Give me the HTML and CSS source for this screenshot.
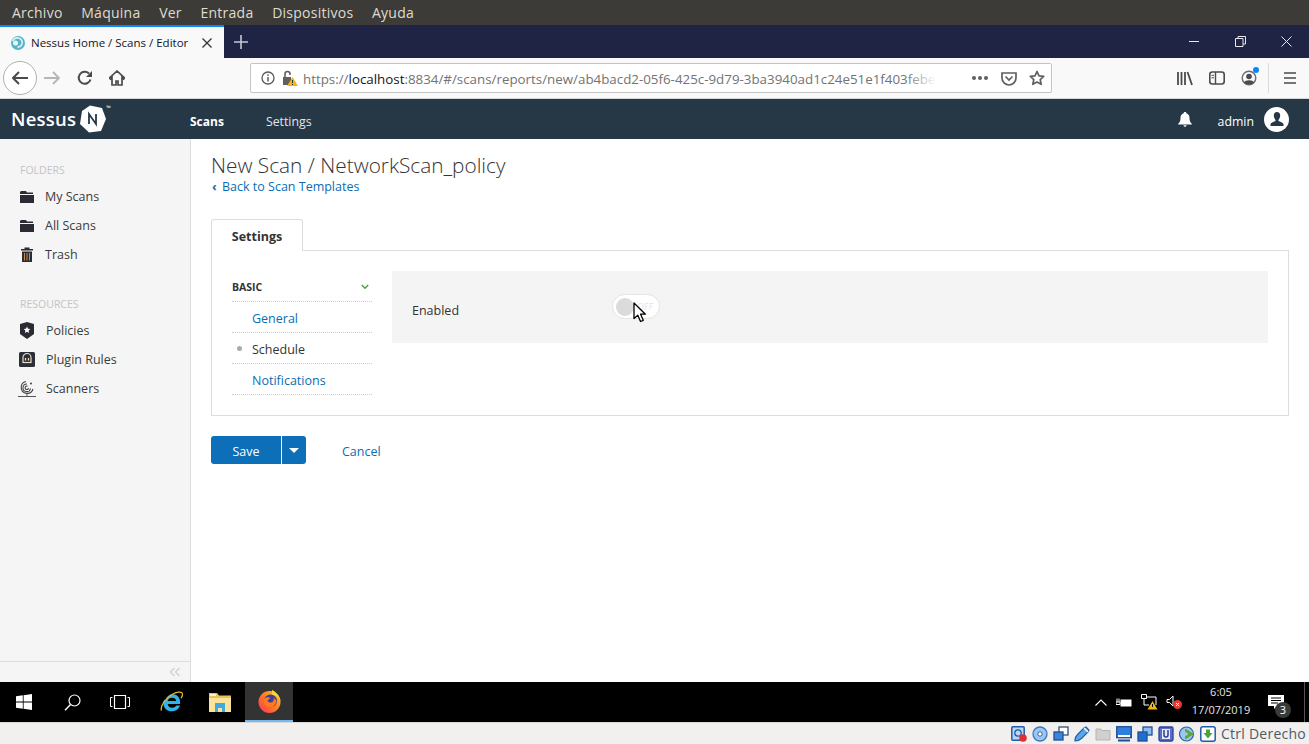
FILE: index.html
```html
<!DOCTYPE html>
<html lang="en">
<head>
    <meta charset="UTF-8">
    <meta name="viewport" content="width=device-width, initial-scale=1.0">
    <title>Nessus Home / Scans / Editor</title>
    <link rel="stylesheet" href="styles.css">
</head>
<body>
    <!-- VirtualBox menu -->
    <nav class="vm-menu">
        <span>Archivo</span><span>Máquina</span><span>Ver</span><span>Entrada</span><span>Dispositivos</span><span>Ayuda</span>
    </nav>

    <!-- Firefox tabs -->
    <div class="tabbar">
        <div class="tab">
            <svg class="favicon" width="16" height="16" viewBox="0 0 16 16"><circle cx="8" cy="8" r="7" fill="#55b4c6"/><path d="M2.500 6c2-4 7-4 9-1s0 7-4 7" fill="none" stroke="#d5eff5" stroke-width="1.800"/><circle cx="5.500" cy="8" r="2.500" fill="#e8f7fa"/></svg>
            <span class="tab-title">Nessus Home / Scans / Editor</span>
            <svg class="tab-close" width="10" height="10" viewBox="0 0 10 10"><path d="M.5.5l9 9M9.500.5l-9 9" stroke="#333" stroke-width="1.300"/></svg>
        </div>
        <svg class="new-tab" width="14" height="14" viewBox="0 0 14 14"><path d="M7 0v14M0 7h14" stroke="#c8c9d2" stroke-width="1.600"/></svg>
        <div class="win-buttons">
            <svg width="11" height="11" viewBox="0 0 11 11"><path d="M0 5.500h10" stroke="#e8e8ee"/></svg>
            <svg width="11" height="11" viewBox="0 0 11 11"><path d="M.5 2.500h7.500v8h-7.500zM3 2.500v-2h7.500v7.500h-2.500" fill="none" stroke="#e8e8ee"/></svg>
            <svg width="11" height="11" viewBox="0 0 11 11"><path d="M.5.5l10 10M10.500.5l-10 10" stroke="#e8e8ee"/></svg>
        </div>
    </div>

    <!-- Firefox toolbar -->
    <div class="toolbar">
        <div class="nav-icons">
            <button class="back-btn">
                <svg width="16" height="14" viewBox="0 0 16 14"><path d="M7 1L1 7l6 6M1 7h15" fill="none" stroke="#4a4a4f" stroke-width="2"/></svg>
            </button>
            <svg class="fwd" width="16" height="14" viewBox="0 0 16 14"><path d="M9 1l6 6-6 6M15 7H0" fill="none" stroke="#b5b5b8" stroke-width="1.800"/></svg>
            <svg class="reload" width="16" height="16" viewBox="0 0 16 16"><path d="M13.500 9.500A6 6 0 1 1 12 3.500" fill="none" stroke="#4a4a4f" stroke-width="2"/><path d="M15 1v6H9z" fill="#4a4a4f"/></svg>
            <svg class="home" width="16" height="16" viewBox="0 0 16 16"><path d="M8 1L.5 8l1 1L3 7.700V15h4v-4h2v4h4V7.700L14.500 9l1-1z" fill="none" stroke="#4a4a4f" stroke-width="1.700"/></svg>
        </div>
        <div class="urlbar">
            <svg class="info" width="14" height="14" viewBox="0 0 14 14"><circle cx="7" cy="7" r="6" fill="none" stroke="#5a5a5f" stroke-width="1.300"/><path d="M7 6v4.500M7 3.300v1.500" stroke="#5a5a5f" stroke-width="1.500"/></svg>
            <svg class="lock" width="16" height="16" viewBox="0 0 16 16"><path d="M1 7h8v8H1z" fill="#5f5f64"/><path d="M3 7V4a2.500 2.500 0 0 1 5 0v1" fill="none" stroke="#5f5f64" stroke-width="1.600"/><path d="M10.500 7L16 16H5z" fill="#f5b50b"/><path d="M10.500 10v3M10.500 14v1" stroke="#333" stroke-width="1"/></svg>
            <div class="url"><span class="url-dim">https://</span>localhost<span class="url-dim">:8834/#/scans/reports/new/ab4bacd2-05f6-425c-9d79-3ba3940ad1c24e51e1f403febe</span></div>
            <div class="url-actions">
                <span class="dots"><i></i><i></i><i></i></span>
                <svg width="16" height="15" viewBox="0 0 16 15"><path d="M1 2h14v5a7 7 0 0 1-14 0z" fill="none" stroke="#5f5f64" stroke-width="1.700"/><path d="M4.500 5.500L8 9l3.500-3.500" fill="none" stroke="#5f5f64" stroke-width="1.700"/></svg>
                <svg width="16" height="16" viewBox="0 0 16 16"><path d="M8 1.500l2 4.400 4.700.5-3.500 3.200 1 4.700L8 12l-4.200 2.300 1-4.700L1.300 6.400 6 5.900z" fill="none" stroke="#5f5f64" stroke-width="1.700" stroke-linejoin="round"/></svg>
            </div>
        </div>
        <div class="tool-icons">
            <svg width="16" height="15" viewBox="0 0 16 15"><path d="M1 1v13M4.500 1v13M8 1v13M10.500 1l4.500 13" stroke="#4a4a4f" stroke-width="1.800" fill="none"/></svg>
            <svg width="16" height="14" viewBox="0 0 16 14"><rect x=".8" y="1" width="14.400" height="12" rx="2.500" fill="none" stroke="#4a4a4f" stroke-width="1.600"/><path d="M6.500 1v12" stroke="#4a4a4f" stroke-width="1.400"/><path d="M2.500 4.300h2.500M2.500 6.800h2.500" stroke="#4a4a4f"/></svg>
            <span class="account">
                <svg width="16" height="16" viewBox="0 0 16 16"><circle cx="8" cy="8" r="6.800" fill="none" stroke="#6a6a6f" stroke-width="1.400"/><circle cx="8" cy="6.500" r="2.800" fill="#4a4a4f"/><path d="M3 12.500c1-3 9-3 10 0-2 2.500-8 2.500-10 0z" fill="#4a4a4f"/></svg>
                <i class="badge-dot"></i>
            </span>
            <span class="tool-sep"></span>
            <svg width="12" height="12" viewBox="0 0 12 12"><path d="M0 1h12M0 6h12M0 11h12" stroke="#4a4a4f" stroke-width="1.700"/></svg>
        </div>
    </div>

    <!-- Nessus header -->
    <header class="app-header">
        <div class="logo">
            <span class="logo-text">Nessus</span>
            <svg width="30" height="30" viewBox="0 0 30 30"><path d="M12 1.500L24 4l4 11-5 12-12 1.500L2 20 4 7z" fill="#fff"/><path d="M11 20V10l7 10V10" fill="none" stroke="#263746" stroke-width="1.800"/></svg>
            <span class="tm">™</span>
        </div>
        <a class="nav-link nav-active">Scans</a>
        <a class="nav-link">Settings</a>
        <div class="header-right">
            <svg width="14" height="15" viewBox="0 0 14 15"><path d="M7 0c1 0 1.300.6 1.300 1.200C10.500 1.800 11.500 3.600 11.500 6c0 3 .8 4.500 2.300 5.800v.7H.2v-.7C1.700 10.500 2.500 9 2.500 6c0-2.400 1-4.200 3.200-4.800C5.700.6 6 0 7 0zM5.500 13.300h3a1.500 1.500 0 0 1-3 0z" fill="#fff"/></svg>
            <span class="admin">admin</span>
            <span class="avatar">
                <svg width="14" height="14" viewBox="0 0 14 14"><path d="M7 0c2 0 3.200 1.500 3.200 3.500S9 7.500 8.500 8v1c1.500.8 4.500 1.300 5 3v2H.5v-2c.5-1.700 3.500-2.200 5-3V8C5 7.500 3.800 5.500 3.800 3.500S5 0 7 0z" fill="#263746"/></svg>
            </span>
        </div>
    </header>

    <div class="app-body">
        <aside class="sidebar">
            <div class="side-scroll">
                <h4 class="side-title">FOLDERS</h4>
                <ul class="side-list">
                    <li>
                        <svg width="14" height="12" viewBox="0 0 14 12"><path d="M1 0h5l1 1.500h6V3H0V1zM0 4h14v8H0z" fill="#2b2b33"/></svg>
                        My Scans
                    </li>
                    <li>
                        <svg width="14" height="12" viewBox="0 0 14 12"><path d="M1 0h5l1 1.500h6V3H0V1zM0 4h14v8H0z" fill="#2b2b33"/></svg>
                        All Scans
                    </li>
                    <li>
                        <svg width="14" height="15" viewBox="0 0 14 15"><path d="M1 2h3.500V.5h5V2H13v1.500H1zM2 4.500h10V15H2z" fill="#2b2b33"/><path d="M4.500 6v7.500M7 6v7.500M9.500 6v7.500" stroke="#c58a4a"/></svg>
                        Trash
                    </li>
                </ul>
                <h4 class="side-title second">RESOURCES</h4>
                <ul class="side-list wide">
                    <li>
                        <svg width="15" height="17" viewBox="0 0 15 17"><path d="M7.500 0l7 2v10l-7 5-7-5V2z" fill="#2b2b33"/><path d="M7.500 4.500l1 2.200 2.400.3-1.800 1.600.5 2.400-2.100-1.200-2.100 1.200.5-2.400L4.100 7l2.400-.3z" fill="#fff"/></svg>
                        Policies
                    </li>
                    <li>
                        <svg width="16" height="15" viewBox="0 0 16 15"><rect width="16" height="15" rx="1.500" fill="#2b2f3a"/><path d="M4 12V7a4 4 0 0 1 8 0v5" fill="none" stroke="#e9dcc0" stroke-width="1.200" transform="translate(0 -1.500)"/><path d="M3.500 10.500h9" stroke="#e9dcc0" stroke-width="1.200"/><path d="M6.500 6v2.500M9.500 6v2.500" stroke="#e9dcc0" stroke-width="1.300"/></svg>
                        Plugin Rules
                    </li>
                    <li>
                        <svg width="18" height="18" viewBox="0 0 18 18"><path d="M8 1.500A6 6 0 1 0 15 9M9 4A3.800 3.800 0 1 0 12.500 8.500M9.500 6.300A1.700 1.700 0 1 0 10.500 8" fill="none" stroke="#444" stroke-width="1.100"/><circle cx="13" cy="3.500" r="1" fill="#444"/><path d="M9 13.500v3M0 16.500h18" stroke="#555"/></svg>
                        Scanners
                    </li>
                </ul>
            </div>
            <div class="side-footer">
                <svg width="12" height="10" viewBox="0 0 12 10"><path d="M5.500 1L1.500 5l4 4M10.500 1l-4 4 4 4" fill="none" stroke="#cfd0d3" stroke-width="1.400"/></svg>
            </div>
        </aside>

        <main class="content">
            <h1 class="page-title">New Scan / NetworkScan_policy</h1>
            <a class="back-link"><span class="back-caret">‹</span>Back to Scan Templates</a>

            <div class="tabs">
                <div class="tab-item">Settings</div>
            </div>
            <section class="panel">
                <div class="side-menu">
                    <div class="menu-head">
                        BASIC
                        <svg width="8" height="6" viewBox="0 0 8 6"><path d="M.8 1l3.200 3.200L7.200 1" fill="none" stroke="#4aa53c" stroke-width="1.500"/></svg>
                    </div>
                    <a class="menu-row">General</a>
                    <a class="menu-row current">Schedule</a>
                    <a class="menu-row">Notifications</a>
                </div>
                <div class="form-block">
                    <label class="form-label">Enabled</label>
                    <div class="toggle">
                        <span class="knob"></span>
                        <span class="toggle-text">OFF</span>
                    </div>
                    <svg class="cursor" width="13" height="21" viewBox="0 0 13 21"><path d="M1 1v15.500l3.800-3.300 2.700 6.300 2.800-1.200-2.700-6.100h4.800z" fill="#fff" stroke="#000" stroke-width="1.300" stroke-linejoin="round"/></svg>
                </div>
            </section>

            <div class="actions">
                <button class="btn-save">Save</button>
                <button class="btn-caret"><i></i></button>
                <a class="cancel">Cancel</a>
            </div>
        </main>
    </div>

    <!-- Windows taskbar -->
    <footer class="taskbar">
        <div class="task-left">
            <span class="task-item">
                <svg width="16" height="16" viewBox="0 0 16 16"><path d="M0 2.300L6.800 1.300v6.300H0zM7.600 1.200L16 0v7.600H7.600zM0 8.400h6.800v6.300L0 13.700zM7.600 8.400H16V16l-8.400-1.200z" fill="#fff"/></svg>
            </span>
            <span class="task-item">
                <svg width="17" height="17" viewBox="0 0 17 17"><circle cx="10.500" cy="6.500" r="5.500" fill="none" stroke="#fff" stroke-width="1.200"/><path d="M6.500 10.500L1 16.300" stroke="#fff" stroke-width="1.400"/></svg>
            </span>
            <span class="task-item">
                <svg width="20" height="14" viewBox="0 0 20 14"><path d="M4.500.5h11v13h-11z" fill="none" stroke="#fff" stroke-width="1.200"/><path d="M2.500 2.500H.5v9h2M17.500 2.500h2v9h-2" fill="none" stroke="#fff"/></svg>
            </span>
            <span class="task-item">
                <svg width="23" height="23" viewBox="0 0 24 23"><path d="M6 8.500C7 5 10 3 13 3c5 0 8 3.500 8 8.500v1.500H8c.3 2.500 2 4 4.500 4 2 0 3.500-.8 4.500-2.300h4c-1.500 3.800-4.800 6-8.500 6C7 20.700 3.500 17 3.500 12c0-1.300.3-2.500 1-3.500zM8 10h9c-.3-2.300-2-3.500-4.300-3.500S8.500 7.700 8 10z" fill="#2bb5e8"/><path d="M1.500 20C0 15 6 7 13 3c4-2.500 8.500-3 10-1.500 1 1 .5 3-1 5.500" fill="none" stroke="#e3b32a" stroke-width="1.300"/></svg>
            </span>
            <span class="task-item">
                <svg width="22" height="19" viewBox="0 0 22 19"><path d="M0 0h8l2 2.500h12V19H0z" fill="#eac25c"/><path d="M0 5h22v14H0z" fill="#fbe39a"/><path d="M1 1h6v2H1z" fill="#fff2c8"/><path d="M6 10h10v9h-3v-4H9v4H6z" fill="#3fa9e0"/></svg>
            </span>
            <span class="task-item task-active">
                <svg width="23" height="23" viewBox="0 0 23 23"><defs><linearGradient id="fx" x1="0" y1="1" x2="1" y2="0"><stop offset="0" stop-color="#ff2f55"/><stop offset=".6" stop-color="#ff8a1f"/><stop offset="1" stop-color="#ffd43a"/></linearGradient></defs><circle cx="11.500" cy="12" r="11" fill="url(#fx)"/><circle cx="12.500" cy="11" r="6.500" fill="#3a3f9c"/><path d="M6 9c2-2 4-2 5.500-1.500s-.5 2-1.500 2.500 0 3 3 2.500 3-3 2.500-5l3 3c0 3-3 8-7 7s-6.500-4-5.500-8.500z" fill="#ff7a1f"/><path d="M14 0c4 2 8 6 8.500 11-2-4-4-6-8.500-6.500z" fill="#ffd43a"/></svg>
            </span>
        </div>
        <div class="tray">
            <svg width="12" height="7" viewBox="0 0 12 7"><path d="M.5 6.500L6 1l5.500 5.500" fill="none" stroke="#fff" stroke-width="1.100"/></svg>
            <svg class="tray-battery" width="16" height="11" viewBox="0 0 16 11"><rect x="4.500" y="2.500" width="11" height="7" fill="#fff"/><path d="M0 5h4v2.500H0zM1 1.500V5M3 1.500V5" stroke="#fff" fill="none"/></svg>
            <svg class="tray-net" width="17" height="16" viewBox="0 0 17 16"><path d="M.5.500h5v4h-5zM3 5v6h5M5.500 3H15v8" fill="none" stroke="#fff"/><path d="M11.500 7l5 8.500h-10z" fill="#f5b50b"/><path d="M11.500 10v3" stroke="#000"/></svg>
            <svg class="tray-vol" width="16" height="14" viewBox="0 0 16 14"><path d="M1 4.500h2.500L7 1v10L3.500 7.500H1z" fill="none" stroke="#fff"/><circle cx="11.500" cy="9.500" r="4.500" fill="#e53935"/><path d="M10 8l3 3M13 8l-3 3" stroke="#fff"/></svg>
            <div class="clock">
                <span>6:05</span>
                <span>17/07/2019</span>
            </div>
            <span class="notif">
                <svg width="16" height="14" viewBox="0 0 16 14"><path d="M0 0h16v11H9l-3 3v-3H0z" fill="#fff"/><path d="M3 3h10M3 5.500h10M3 8h7" stroke="#000"/></svg>
                <i class="notif-count">3</i>
            </span>
            <span class="show-desktop"></span>
        </div>
    </footer>

    <!-- VirtualBox status bar -->
    <div class="vm-status">
        <svg width="16" height="16" viewBox="0 0 16 16"><rect x=".8" y=".8" width="12.400" height="13.400" rx="1" fill="#bcd6f0" stroke="#1f5da8" stroke-width="1.500"/><circle cx="7" cy="7" r="3.200" fill="none" stroke="#1f5da8" stroke-width="1.300"/><circle cx="12" cy="12" r="3.800" fill="#e02f2f"/></svg>
        <svg width="16" height="16" viewBox="0 0 16 16"><circle cx="8" cy="8" r="7" fill="#9cc6ee" stroke="#3a78c2" stroke-width="1.300"/><circle cx="8" cy="8" r="2.200" fill="#fff" stroke="#2a62a8"/></svg>
        <svg width="16" height="16" viewBox="0 0 16 16"><rect x="6" y="1" width="9" height="8" fill="#fff" stroke="#33507a" stroke-width="1.300"/><rect x="1" y="6" width="9" height="8" fill="#3a84dc" stroke="#1f4f96" stroke-width="1.300"/></svg>
        <svg width="16" height="16" viewBox="0 0 16 16"><path d="M1 15c-.5-3 1-5 3-7l6-6 2-1 3 3-1 2-6 6c-2 2-4 3-7 3z" fill="#5ba6e8" stroke="#1f5da8" stroke-width="1.100"/><path d="M10 2l4 4" stroke="#fff" stroke-width="1.300"/></svg>
        <svg width="16" height="16" viewBox="0 0 16 16"><path d="M1 3h5l1 1.500h8V14H1z" fill="#d0d0ce" stroke="#b4b4b2"/></svg>
        <svg width="16" height="16" viewBox="0 0 16 16"><rect x=".7" y=".7" width="14.600" height="11" fill="#2f7fdc" stroke="#1f4f96" stroke-width="1.300"/><path d="M2 9h12v2H2z" fill="#fff"/><path d="M2 14.500h12" stroke="#1f4f96" stroke-width="2"/></svg>
        <svg width="16" height="16" viewBox="0 0 16 16"><rect x="6" y="1" width="9" height="8" fill="#8dbcf0" stroke="#1f4f96" stroke-width="1.300"/><rect x="1" y="6" width="9" height="9" fill="#1f6fd0" stroke="#1f4f96" stroke-width="1.300"/></svg>
        <svg width="16" height="16" viewBox="0 0 16 16"><rect x="1" y="1" width="14" height="14" rx="1.500" fill="#5a6fc8" stroke="#2e3f96" stroke-width="1.300"/><rect x="4" y="3" width="8" height="10" fill="#e5e9f8"/><path d="M6 4v5a2 2 0 0 0 4 0V4" fill="none" stroke="#2e3f96" stroke-width="1.500"/></svg>
        <svg width="16" height="16" viewBox="0 0 16 16"><circle cx="7.500" cy="8" r="7" fill="#9cc6ee" stroke="#2a62a8" stroke-width="1.200"/><path d="M6 2.500L15 8l-9 5.500v-3l3.500-2.500L6 5.500z" fill="#5ba83a"/></svg>
        <svg width="16" height="16" viewBox="0 0 16 16"><rect x=".8" y=".8" width="14.400" height="14.400" rx="2" fill="#fff" stroke="#1f5da8" stroke-width="1.500"/><path d="M6 3.500h4V7h2.500L8 12.500 3.500 7H6z" fill="#4aa53c"/></svg>
        <span class="ctrl-text">Ctrl Derecho</span>
    </div>
</body>
</html>
```

FILE: styles.css
```css
* {
    box-sizing: border-box;
}
html, body {
    margin: 0;
    height: 744px;
    overflow: hidden;
}
body {
    display: flex;
    flex-direction: column;
    font-family: "Open Sans", sans-serif;
    font-size: 12.5px;
    color: #333;
    background-color: #fff;
}
svg {
    display: block;
    flex: none;
}

/* VirtualBox menu */
.vm-menu {
    height: 25px;
    display: flex;
    align-items: center;
    gap: 18.7px;
    padding-left: 12px;
    background-color: #3c3b37;
    color: #dfdbd2;
    font-size: 14px;
    letter-spacing: .25px;
}

/* tab bar */
.tabbar {
    height: 33px;
    display: flex;
    align-items: stretch;
    background-color: #1f2344;
}
.tab {
    width: 224px;
    display: flex;
    align-items: center;
    padding-left: 10px;
    background-color: #f9f9fa;
    border-top: 2px solid #0a84ff;
}
.favicon {
    margin-right: 5px;
}
.tab-title {
    font-size: 11.5px;
    color: #15141a;
    white-space: nowrap;
}
.tab-close {
    margin-left: 14px;
}
.new-tab {
    align-self: center;
    margin-left: 10px;
}
.win-buttons {
    margin-left: auto;
    display: flex;
    align-items: center;
    gap: 35px;
    padding-right: 17px;
}

/* toolbar */
.toolbar {
    height: 41px;
    display: flex;
    align-items: center;
    background-color: #f9f9fa;
    border-bottom: 1px solid #d7d7db;
}
.nav-icons {
    width: 250px;
    display: flex;
    align-items: center;
    padding-left: 3px;
}
.back-btn {
    width: 34px;
    height: 34px;
    display: flex;
    align-items: center;
    justify-content: center;
    padding: 0;
    background-color: #fff;
    border: 1px solid #b1b1b3;
    border-radius: 50%;
}
.fwd {
    margin-left: 7px;
}
.reload {
    margin-left: 17px;
}
.home {
    margin-left: 16px;
}
.urlbar {
    width: 802px;
    height: 30px;
    display: flex;
    align-items: center;
    padding-left: 10px;
    background-color: #fff;
    border: 1px solid #c4c4c4;
    border-radius: 2px;
}
.lock {
    margin-left: 7px;
}
.url {
    position: relative;
    width: 633px;
    margin-left: 5px;
    padding-top: 1px;
    overflow: hidden;
    white-space: nowrap;
    font-size: 13.35px;
    color: #15141a;
}
.url::after {
    content: "";
    position: absolute;
    top: 0;
    right: 0;
    bottom: 0;
    width: 30px;
    background: linear-gradient(to right, rgba(255, 255, 255, 0), #fff);
}
.url-dim {
    color: #737373;
}
.url-actions {
    display: flex;
    align-items: center;
    gap: 12px;
    margin-left: 36px;
}
.dots {
    display: flex;
    gap: 2px;
    margin-right: 1px;
}
.dots i {
    width: 4px;
    height: 4px;
    border-radius: 50%;
    background-color: #5f5f64;
}
.tool-icons {
    display: flex;
    align-items: center;
    margin-left: 125px;
    gap: 16px;
}
.account {
    position: relative;
}
.badge-dot {
    position: absolute;
    top: -3px;
    right: -2px;
    width: 6px;
    height: 6px;
    border-radius: 50%;
    background-color: #0a84ff;
}
.tool-sep {
    width: 1px;
    height: 30px;
    margin: 0 -1px 0 -5px;
    background-color: #dcdcde;
}

/* nessus header */
.app-header {
    height: 40px;
    display: flex;
    align-items: center;
    background-color: #263746;
    color: #fff;
}
.logo {
    width: 190px;
    display: flex;
    align-items: center;
    padding-left: 11px;
    position: relative;
}
.logo-text {
    margin: -2px 2px 0 0;
    font-size: 18.500px;
    font-weight: 600;
    letter-spacing: .2px;
}
.tm {
    font-size: 6px;
    align-self: flex-start;
    margin-left: -2px;
}
.nav-link {
    margin-top: 4px;
    font-size: 12.300px;
    color: #e3e7ea;
    margin-right: 42px;
}
.nav-active {
    font-size: 12px;
    color: #fff;
    font-weight: 700;
}
.header-right {
    margin-left: auto;
    display: flex;
    align-items: center;
    padding-right: 20px;
}
.admin {
    margin-top: 4px;
    margin-left: 26px;
    font-size: 12.300px;
}
.avatar {
    width: 25px;
    height: 25px;
    margin-left: 10px;
    display: flex;
    align-items: center;
    justify-content: center;
    background-color: #fff;
    border-radius: 50%;
}

/* page body */
.app-body {
    height: 543px;
    display: flex;
}
.sidebar {
    width: 191px;
    display: flex;
    flex-direction: column;
    background-color: #f5f5f5;
    border-right: 1px solid #ddd;
}
.side-scroll {
    flex: 1;
    padding: 24px 0 0 20px;
}
.side-title {
    margin: 0;
    font-size: 10.500px;
    line-height: 14px;
    font-weight: 400;
    color: #c4c4c4;
}
.side-title.second {
    margin-top: 28px;
}
.side-list {
    margin: 5px 0 0;
    padding: 0;
    list-style: none;
}
.side-list li {
    height: 29px;
    display: flex;
    align-items: center;
    gap: 11px;
    color: #3b3b3b;
}
.side-list.wide li {
    gap: 10px;
    margin-left: -2px;
}
.side-list.wide li svg {
    width: 18px;
}
.side-footer {
    height: 21px;
    display: flex;
    align-items: center;
    justify-content: flex-end;
    padding-right: 9px;
    border-top: 1px solid #ddd;
}

.content {
    flex: 1;
    padding: 13px 20px 0;
}
.page-title {
    margin: 0;
    font-size: 20.800px;
    line-height: 26px;
    font-weight: 300;
    color: #333;
}
.back-link {
    display: block;
    height: 18px;
    line-height: 17px;
    color: #0a6eb4;
}
.back-caret {
    display: inline-block;
    width: 11px;
    padding-left: 1px;
    font-weight: 700;
}
.tabs {
    display: flex;
    margin-top: 23px;
}
.tab-item {
    width: 92px;
    height: 32px;
    padding-top: 8px;
    margin-bottom: -1px;
    position: relative;
    text-align: center;
    font-weight: 700;
    color: #333;
    background-color: #fff;
    border: 1px solid #ddd;
    border-bottom: none;
    border-radius: 3px 3px 0 0;
}
.panel {
    height: 166px;
    display: flex;
    padding: 20px;
    border: 1px solid #ddd;
}
.side-menu {
    width: 140px;
}
.menu-head {
    height: 31px;
    display: flex;
    justify-content: space-between;
    align-items: center;
    padding: 2px 3px 0 0;
    font-size: 10.500px;
    font-weight: 700;
    color: #333;
    border-bottom: 1px dotted #ccc;
}
.menu-row {
    position: relative;
    display: block;
    height: 31px;
    line-height: 33px;
    padding-left: 20px;
    color: #0a6eb4;
    border-bottom: 1px dotted #ccc;
}
.menu-row.current {
    color: #333;
}
.menu-row.current::before {
    content: "";
    position: absolute;
    left: 5px;
    top: 13px;
    width: 5px;
    height: 5px;
    border-radius: 50%;
    background-color: #aaa;
}
.form-block {
    position: relative;
    flex: 1;
    height: 72px;
    margin-left: 20px;
    padding: 23px 20px;
    display: flex;
    align-items: flex-start;
    background-color: #f4f4f4;
}
.form-label {
    width: 200px;
    line-height: 32px;
    margin-top: 1px;
    color: #333;
}
.toggle {
    width: 48px;
    height: 25px;
    display: flex;
    align-items: center;
    padding: 0 3px;
    background-color: #fff;
    border: 1px solid #e4e4e4;
    border-radius: 13px;
}
.knob {
    width: 18px;
    height: 18px;
    border-radius: 50%;
    background-color: #dbdbdb;
}
.toggle-text {
    margin-left: 3px;
    font-size: 9px;
    color: #e2e2ee;
}
.cursor {
    position: absolute;
    left: 241px;
    top: 31px;
}
.actions {
    display: flex;
    align-items: center;
    margin-top: 20px;
}
.btn-save {
    width: 70px;
    height: 28px;
    padding: 2px 0 0;
    font: inherit;
    color: #fff;
    background-color: #0d6fb8;
    border: none;
    border-radius: 3px 0 0 3px;
}
.btn-caret {
    width: 24px;
    height: 28px;
    margin-left: 1px;
    display: flex;
    align-items: center;
    justify-content: center;
    padding: 0;
    background-color: #0d6fb8;
    border: none;
    border-radius: 0 3px 3px 0;
}
.btn-caret i {
    width: 0;
    height: 0;
    border-left: 5px solid transparent;
    border-right: 5px solid transparent;
    border-top: 5px solid #fff;
}
.cancel {
    margin: 2px 0 0 36px;
    color: #0a6eb4;
}

/* taskbar */
.taskbar {
    height: 40px;
    display: flex;
    justify-content: space-between;
    background-color: #000;
    color: #fff;
}
.task-left {
    display: flex;
}
.task-item {
    width: 48px;
    display: flex;
    align-items: center;
    justify-content: center;
}
.task-item:nth-child(4) {
    margin-left: 3px;
}
.task-item:nth-child(5),
.task-item:nth-child(6) {
    margin-left: 1px;
}
.task-active {
    background-color: #333;
    border-bottom: 2px solid #76b9ed;
}
.tray {
    display: flex;
    align-items: center;
}
.tray-battery {
    margin-left: 9px;
}
.tray-net {
    margin-left: 9px;
}
.tray-vol {
    margin-left: 8px;
}
.clock {
    width: 82px;
    margin-left: -2px;
    padding-bottom: 4px;
    display: flex;
    flex-direction: column;
    align-items: center;
    gap: 3px;
    font-size: 11px;
    line-height: 15px;
    color: #e6e6e6;
}
.notif {
    position: relative;
    margin-left: 6px;
    margin-right: 20px;
}
.notif-count {
    position: absolute;
    right: -7px;
    bottom: -9px;
    width: 16px;
    height: 16px;
    line-height: 16px;
    text-align: center;
    font-size: 11px;
    font-style: normal;
    color: #fff;
    background-color: #3a3a3a;
    border-radius: 50%;
}
.show-desktop {
    width: 1px;
    height: 40px;
    margin-right: 4px;
    background-color: #555;
}

/* status bar */
.vm-status {
    flex: 1;
    display: flex;
    align-items: center;
    justify-content: flex-end;
    gap: 5px;
    padding-right: 3px;
    background-color: #f1f0ee;
    border-top: 1px solid #d8d8d6;
}
.ctrl-text {
    font-size: 14px;
    letter-spacing: .25px;
    color: #505a66;
}
```
